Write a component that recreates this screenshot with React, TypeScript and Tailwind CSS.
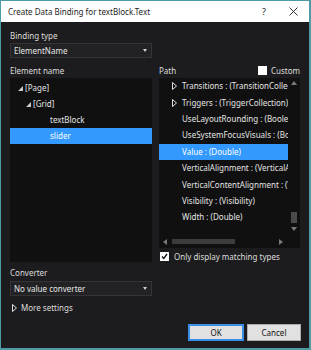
import React from 'react';

const font = { fontFamily: '"Noto Sans", "Open Sans", Arial, sans-serif' };

function ExpandedArrow() {
  return (
    <svg width="5" height="5" viewBox="0 0 5 5" className="shrink-0">
      <polygon points="5,0 5,5 0,5" fill="#c8c8c8" />
    </svg>
  );
}

function CollapsedArrow() {
  return (
    <svg width="5" height="8" viewBox="0 0 5 8" className="shrink-0">
      <polygon points="0.5,0.5 4.5,4 0.5,7.5" fill="none" stroke="#e0e0e0" strokeWidth="1" />
    </svg>
  );
}

function ComboArrow() {
  return (
    <svg width="4" height="3" viewBox="0 0 4 3" className="shrink-0">
      <polygon points="0,0 4,0 2,3" fill="#d0d0d0" />
    </svg>
  );
}

function Combo({ value }: { value: string }) {
  return (
    <div className="flex h-[15px] w-[142px] items-center justify-between border border-[#343437] bg-[#222224] pl-[3px] pr-[4px] text-[8px] leading-[11px] text-[#e6e6e6]">
      <span>{value}</span>
      <ComboArrow />
    </div>
  );
}

function CheckBox({ checked }: { checked?: boolean }) {
  return (
    <div className="flex h-[9px] w-[9px] shrink-0 items-center justify-center bg-white">
      {checked && (
        <svg width="7" height="7" viewBox="0 0 7 7">
          <polyline points="1,3.5 2.8,5.5 6,1" fill="none" stroke="#111" strokeWidth="1.3" />
        </svg>
      )}
    </div>
  );
}

const treeItems = [
  { label: '[Page]', indent: 8, arrow: true },
  { label: '[Grid]', indent: 16, arrow: true },
  { label: 'textBlock', indent: 30, arrow: false },
  { label: 'slider', indent: 30, arrow: false, selected: true },
];

const pathItems = [
  { label: 'Transitions : (TransitionCollection)', arrow: true },
  { label: 'Triggers : (TriggerCollection)', arrow: true },
  { label: 'UseLayoutRounding : (Boolean)' },
  { label: 'UseSystemFocusVisuals : (Boolean)' },
  { label: 'Value : (Double)', selected: true },
  { label: 'VerticalAlignment : (VerticalAlignment)' },
  { label: 'VerticalContentAlignment : (VerticalAlignment)' },
  { label: 'Visibility : (Visibility)' },
  { label: 'Width : (Double)' },
];

export default function App() {
  return (
    <div className="h-[350px] w-[311px] bg-[#4f9ba5] pb-[2px] pl-px pr-[2px] pt-px" style={font}>
      <div className="flex h-full flex-col">
        {/* Title bar */}
        <div className="flex h-[21px] shrink-0 items-center bg-white pl-[7px] text-[8px] text-[#1e1e1e]">
          <span className="flex-1">Create Data Binding for textBlock.Text</span>
          <span className="w-[27px] text-[9px]">?</span>
          <svg width="9" height="9" viewBox="0 0 9 9" className="mr-[11px]">
            <path d="M0.5 0.5 L8.5 8.5 M8.5 0.5 L0.5 8.5" stroke="#333" strokeWidth="1" />
          </svg>
        </div>

        {/* Body */}
        <div className="flex flex-1 flex-col bg-[#1c1c1e] pl-[9px] pr-[8px] pt-[8px] text-[8px] leading-[12px] text-[#dcdcdc]">
          <div>Binding type</div>
          <div className="mt-px">
            <Combo value="ElementName" />
          </div>

          <div className="mt-[5px] flex gap-[7px]">
            {/* Element name column */}
            <div className="flex w-[142px] flex-col">
              <div className="flex h-[15px] items-center">Element name</div>
              <div className="h-[184px] bg-[#101010] pt-[2px]">
                {treeItems.map((t) => (
                  <div
                    key={t.label}
                    className={`flex h-[16px] items-center text-[#e4e4e4] ${t.selected ? 'bg-[#3399ff] text-white' : ''}`}
                    style={{ paddingLeft: t.indent }}
                  >
                    <span className="flex w-[7px] justify-start">{t.arrow && <ExpandedArrow />}</span>
                    <span className={t.arrow ? '' : 'pl-[3px]'}>{t.label}</span>
                  </div>
                ))}
              </div>
            </div>

            {/* Path column */}
            <div className="flex w-[141px] flex-col">
              <div className="flex h-[15px] items-center justify-between">
                <span>Path</span>
                <div className="flex items-center gap-[4px]">
                  <CheckBox />
                  <span>Custom</span>
                </div>
              </div>
              <div className="flex h-[170px] flex-col bg-[#101010]">
                <div className="flex h-[157px]">
                  <div className="w-[129px] overflow-hidden">
                    {pathItems.map((p) => (
                      <div
                        key={p.label}
                        className={`flex h-[16.4px] items-center whitespace-nowrap text-[#e4e4e4] ${p.selected ? 'bg-[#3399ff] text-white' : ''}`}
                      >
                        <span className="flex w-[23px] shrink-0 justify-end pr-[5px]">{p.arrow && <CollapsedArrow />}</span>
                        <span>{p.label}</span>
                      </div>
                    ))}
                  </div>
                  {/* vertical scrollbar */}
                  <div className="flex w-[12px] flex-col items-center pb-[4px] pt-[3px]">
                    <svg width="6" height="4" viewBox="0 0 6 4">
                      <polygon points="0,4 6,4 3,0" fill="#7a7a7a" />
                    </svg>
                    <div className="flex-1" />
                    <div className="h-[11px] w-[6px] bg-[#4a4a4a]" />
                    <div className="h-[4px]" />
                    <svg width="6" height="4" viewBox="0 0 6 4">
                      <polygon points="0,0 6,0 3,4" fill="#7a7a7a" />
                    </svg>
                  </div>
                </div>
                {/* horizontal scrollbar */}
                <div className="flex h-[13px] w-[129px] items-center">
                  <div className="w-[4px]" />
                  <svg width="4" height="6" viewBox="0 0 4 6">
                    <polygon points="4,0 4,6 0,3" fill="#7a7a7a" />
                  </svg>
                  <div className="w-[5px]" />
                  <div className="h-[5px] w-[63px] bg-[#3c3c3c]" />
                  <div className="flex-1" />
                  <svg width="4" height="6" viewBox="0 0 4 6">
                    <polygon points="0,0 0,6 4,3" fill="#7a7a7a" />
                  </svg>
                  <div className="w-[5px]" />
                </div>
              </div>
              <div className="mt-[3px] flex h-[11px] items-center gap-[5px] pl-px">
                <CheckBox checked />
                <span>Only display matching types</span>
              </div>
            </div>
          </div>

          <div className="mt-[5px]">Converter</div>
          <div className="mt-[2px]">
            <Combo value="No value converter" />
          </div>
          <div className="mt-[6px] flex items-center gap-[4px] pl-[2px]">
            <CollapsedArrow />
            <span>More settings</span>
          </div>

          <div className="mt-[10px] flex justify-end gap-[3px]">
            <button className="flex h-[17px] w-[56px] items-center justify-center border-2 border-[#3a8ee6] bg-[#e1e1e1] text-[8px] text-[#111]">
              OK
            </button>
            <button className="flex h-[17px] w-[54px] items-center justify-center border border-[#adadad] bg-[#e1e1e1] text-[8px] text-[#111]">
              Cancel
            </button>
          </div>
        </div>
      </div>
    </div>
  );
}
